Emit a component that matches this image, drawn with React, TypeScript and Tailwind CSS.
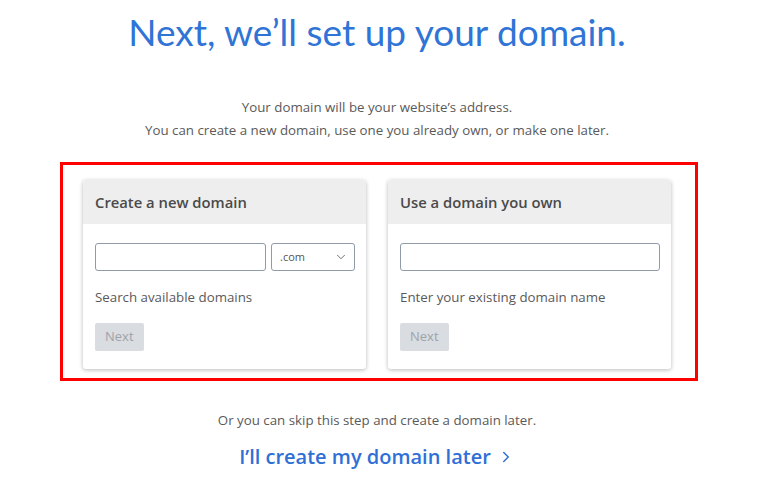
import { ChevronDown, ChevronRight } from "lucide-react";

function Card({
  title,
  hint,
  withSelect,
}: {
  title: string;
  hint: string;
  withSelect?: boolean;
}) {
  return (
    <div className="w-[283px] overflow-hidden rounded-[3px] bg-white shadow-[0_1px_4px_rgba(0,0,0,0.28)]">
      <div className="flex h-[44px] items-center bg-[#eeeeee] px-[12px] text-[14.8px] font-semibold text-[#4a4a4a]">
        {title}
      </div>
      <div className="pb-[18px] pl-[12px] pr-[11px] pt-[19px]">
        <div className="flex gap-[5px]">
          <input
            type="text"
            className="h-[28px] min-w-0 flex-1 rounded-[3px] border border-[#8f9bab] bg-white px-2 text-[13px] outline-none"
          />
          {withSelect && (
            <div className="flex h-[28px] w-[84px] items-center justify-between rounded-[3px] border border-[#8f9bab] bg-white pl-[8px] pr-[6px] text-[11px] text-[#555]">
              <span>.com</span>
              <ChevronDown className="h-[14px] w-[14px] text-[#666]" strokeWidth={1.6} />
            </div>
          )}
        </div>
        <p className="mt-[17px] text-[13.3px] leading-[18px] text-[#5a5a5a]">{hint}</p>
        <button
          disabled
          className="mt-[17px] h-[28px] rounded-[2px] bg-[#d9dce0] px-[10px] text-[13px] text-[#9ea3a9]"
        >
          Next
        </button>
      </div>
    </div>
  );
}

export default function App() {
  return (
    <div
      className="flex h-[477px] w-[754px] flex-col items-center bg-white"
      style={{ fontFamily: '"Open Sans", "Liberation Sans", sans-serif' }}
    >
      <h1
        className="mt-[10px] text-[37px] leading-[44px] text-[#2f74d6]"
        style={{ fontFamily: 'Lato, "Open Sans", sans-serif' }}
      >
        Next, we’ll set up your domain.
      </h1>
      <div className="mt-[42px] text-center text-[13.3px] leading-[23px] text-[#5a5a5a]">
        <p>Your domain will be your website’s address.</p>
        <p>You can create a new domain, use one you already own, or make one later.</p>
      </div>
      <div className="ml-[4px] mt-[20px] flex gap-[22px] border-[3px] border-[#ff0000] pb-[9px] pl-[20px] pr-[24px] pt-[15px]">
        <Card title="Create a new domain" hint="Search available domains" withSelect />
        <Card title="Use a domain you own" hint="Enter your existing domain name" />
      </div>
      <p className="mt-[30px] text-[13.3px] leading-[18px] text-[#5a5a5a]">
        Or you can skip this step and create a domain later.
      </p>
      <a
        href="#"
        className="mt-[14px] flex items-center gap-[6px] text-[20px] font-semibold leading-[28px] text-[#2f6fd6]"
      >
        I’ll create my domain later
        <ChevronRight className="h-[18px] w-[18px]" strokeWidth={2} />
      </a>
    </div>
  );
}
